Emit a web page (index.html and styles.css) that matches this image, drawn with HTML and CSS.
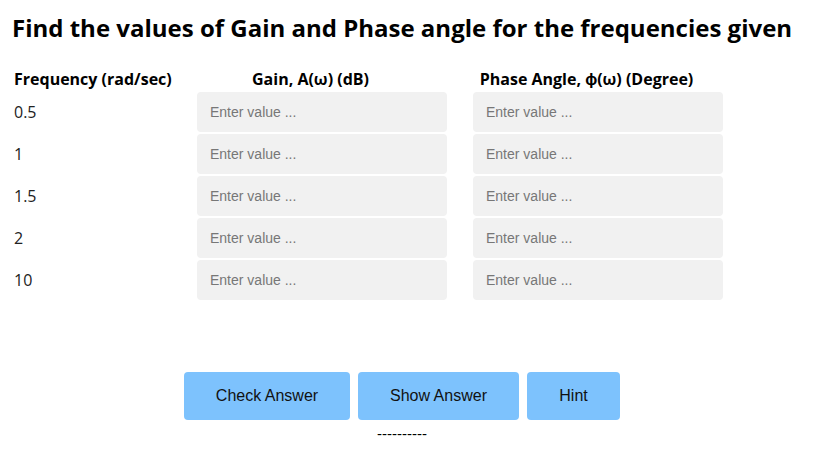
FILE: index.html
```html
<!DOCTYPE html>
<html>
<head>
<meta charset="utf-8">
<link rel="stylesheet" href="styles.css">
</head>
<body>
<h1 class="title">Find the values of Gain and Phase angle for the frequencies given</h1>
<div class="table">
  <div class="th th-freq">Frequency (rad/sec)</div>
  <div class="th th-center">Gain, A(ω) (dB)</div>
  <div class="th th-center">Phase Angle, ϕ(ω) (Degree)</div>

  <div class="freq">0.5</div>
  <input class="inp" type="text" placeholder="Enter value ...">
  <input class="inp" type="text" placeholder="Enter value ...">

  <div class="freq">1</div>
  <input class="inp" type="text" placeholder="Enter value ...">
  <input class="inp" type="text" placeholder="Enter value ...">

  <div class="freq">1.5</div>
  <input class="inp" type="text" placeholder="Enter value ...">
  <input class="inp" type="text" placeholder="Enter value ...">

  <div class="freq">2</div>
  <input class="inp" type="text" placeholder="Enter value ...">
  <input class="inp" type="text" placeholder="Enter value ...">

  <div class="freq">10</div>
  <input class="inp" type="text" placeholder="Enter value ...">
  <input class="inp" type="text" placeholder="Enter value ...">
</div>
<div class="actions">
  <div class="buttons">
    <button class="btn btn-check">Check Answer</button>
    <button class="btn btn-show">Show Answer</button>
    <button class="btn btn-hint">Hint</button>
  </div>
  <div class="result">----------</div>
</div>
</body>
</html>
```
FILE: styles.css
```css
html, body {
  margin: 0;
  padding: 0;
  background: #fff;
}
body {
  font-family: "Open Sans", sans-serif;
  color: #111;
}
.title {
  margin: 0;
  padding: 13px 0 0 12px;
  font-size: 24px;
  font-weight: 700;
  line-height: 30px;
  color: #000;
}
.table {
  display: grid;
  grid-template-columns: 157px 250px 250px;
  column-gap: 26px;
  row-gap: 2px;
  margin: 25px 0 0 14px;
}
.th {
  font-size: 16px;
  font-weight: 700;
  line-height: 22px;
  color: #000;
  white-space: nowrap;
}
.th-freq {
  text-align: left;
}
.th-center {
  text-align: center;
  padding-right: 23px;
}
.freq {
  font-size: 16px;
  line-height: 40px;
  color: #222;
}
.inp {
  box-sizing: border-box;
  height: 40px;
  width: 250px;
  border: none;
  border-radius: 4px;
  background: #f1f1f1;
  padding: 0 13px;
  font-family: "Liberation Sans", Arial, sans-serif;
  font-size: 14px;
  color: #222;
  outline: none;
}
.inp::placeholder {
  color: #777;
}
.actions {
  margin: 72px 16px 0 0;
  display: flex;
  flex-direction: column;
  align-items: center;
}
.buttons {
  display: flex;
  gap: 8px;
}
.btn {
  height: 48px;
  border: none;
  border-radius: 4px;
  background: #7dc2fd;
  color: #111;
  font-family: "Liberation Sans", Arial, sans-serif;
  font-size: 16px;
  padding: 0;
  cursor: pointer;
}
.btn-check { width: 166px; }
.btn-show { width: 161px; }
.btn-hint { width: 93px; }
.result {
  margin-top: 5px;
  font-family: "Liberation Sans", Arial, sans-serif;
  font-size: 15px;
  line-height: 17px;
  color: #000;
}
```
